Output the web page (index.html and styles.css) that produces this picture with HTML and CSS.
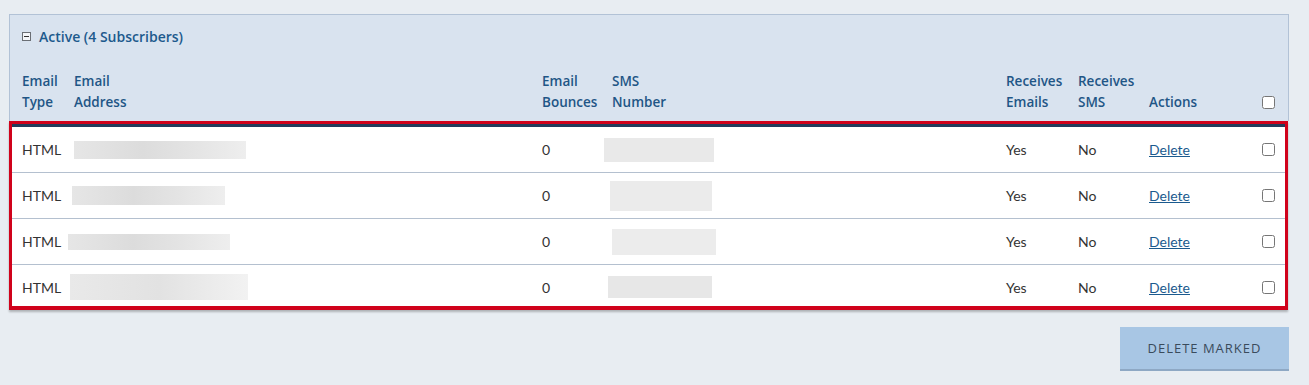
FILE: index.html
```html
<!DOCTYPE html>
<html>
<head>
<meta charset="utf-8">
<link rel="stylesheet" href="styles.css">
</head>
<body>
<div class="wrap">
  <div class="panel">
    <div class="panel-title">
      <svg class="toggle" width="9" height="9" viewBox="0 0 9 9"><rect x="0.5" y="0.5" width="8" height="8" fill="#f4f6f9" stroke="#6b6f75"/><line x1="2" y1="4.5" x2="7" y2="4.5" stroke="#333" stroke-width="1"/></svg>
      <span>Active (4 Subscribers)</span>
    </div>
    <div class="grid thead">
      <div class="th">Email<br>Type</div>
      <div class="th">Email<br>Address</div>
      <div class="th">Email<br>Bounces</div>
      <div class="th">SMS<br>Number</div>
      <div class="th">Receives<br>Emails</div>
      <div class="th">Receives<br>SMS</div>
      <div class="th">Actions</div>
      <div class="th chk"><input type="checkbox"></div>
    </div>
  </div>
  <div class="tbody">
    <div class="grid row">
      <div class="td">HTML</div>
      <div class="td"><span class="ph ph-e1"></span></div>
      <div class="td">0</div>
      <div class="td"><span class="ph ph-s1"></span></div>
      <div class="td">Yes</div>
      <div class="td">No</div>
      <div class="td"><a href="#">Delete</a></div>
      <div class="td chk"><input type="checkbox"></div>
    </div>
    <div class="grid row">
      <div class="td">HTML</div>
      <div class="td"><span class="ph ph-e2"></span></div>
      <div class="td">0</div>
      <div class="td"><span class="ph ph-s2"></span></div>
      <div class="td">Yes</div>
      <div class="td">No</div>
      <div class="td"><a href="#">Delete</a></div>
      <div class="td chk"><input type="checkbox"></div>
    </div>
    <div class="grid row">
      <div class="td">HTML</div>
      <div class="td"><span class="ph ph-e3"></span></div>
      <div class="td">0</div>
      <div class="td"><span class="ph ph-s3"></span></div>
      <div class="td">Yes</div>
      <div class="td">No</div>
      <div class="td"><a href="#">Delete</a></div>
      <div class="td chk"><input type="checkbox"></div>
    </div>
    <div class="grid row last">
      <div class="td">HTML</div>
      <div class="td"><span class="ph ph-e4"></span></div>
      <div class="td">0</div>
      <div class="td"><span class="ph ph-s4"></span></div>
      <div class="td">Yes</div>
      <div class="td">No</div>
      <div class="td"><a href="#">Delete</a></div>
      <div class="td chk"><input type="checkbox"></div>
    </div>
  </div>
  <div class="actions">
    <button class="btn">DELETE MARKED</button>
  </div>
</div>
</body>
</html>
```

FILE: styles.css
```css
html, body {
  margin: 0;
  padding: 0;
  background: #e8edf2;
  font-family: Lato, "Open Sans", sans-serif;
  font-size: 14px;
  color: #333;
}
.wrap {
  padding: 14px 0 0 9px;
  width: 1280px;
}
.panel {
  background: #d9e3ef;
  border: 1px solid #b2c2d6;
  border-bottom: none;
}
.panel-title {
  display: flex;
  align-items: center;
  height: 20px;
  padding: 11px 0 0 12px;
  color: #1d5a8d;
  font-family: "Open Sans", Lato, sans-serif;
  font-weight: 600;
  font-size: 14px;
  margin-bottom: 1px;
}
.toggle {
  margin-right: 8px;
  margin-top: 1px;
}
.grid {
  display: grid;
  grid-template-columns: 52px 468px 70px 394px 72px 71px 113px 1fr;
}
.thead {
  padding: 24px 0 8px 2px;
  align-items: end;
}
.th {
  padding-left: 10px;
  line-height: 21px;
  color: #1f5686;
  font-family: "Open Sans", Lato, sans-serif;
  font-weight: 600;
  font-size: 13.5px;
  white-space: nowrap;
}
.chk {
  display: flex;
  align-items: center;
}
.thead .chk {
  height: 21px;
}
input[type=checkbox] {
  margin: 0;
  width: 13px;
  height: 13px;
}
.tbody {
  width: 1279px;
  box-sizing: border-box;
  border: 3px solid #d0021b;
  border-bottom-width: 4px;
  background: #fff;
  box-shadow: 0 2px 2px rgba(0, 0, 0, 0.25);
}
.tbody::before {
  content: "";
  display: block;
  height: 3px;
  background: #223d5c;
}
.row {
  height: 45px;
  align-items: center;
  border-bottom: 1px solid #b4c0cf;
}
.row.last {
  box-sizing: border-box;
  height: 41px;
  padding-top: 3px;
  border-bottom: none;
}
.td {
  padding-left: 10px;
  display: flex;
  align-items: center;
  white-space: nowrap;
}
.td a {
  color: #1b5a8e;
  text-decoration: underline;
}
.ph {
  display: block;
  background: linear-gradient(90deg, #e6e6e6 0%, #dcdcdc 40%, #e4e4e4 70%, #eeeeee 100%);
}
.ph-e1 { width: 172px; height: 18px; margin-left: 0; }
.ph-e2 { width: 153px; height: 19px; margin-left: -2px; }
.ph-e3 { width: 162px; height: 16px; margin-left: -6px; }
.ph-e4 { width: 178px; height: 26px; margin-left: -4px; background: linear-gradient(90deg, #e9e9e9 0%, #e2e2e2 50%, #f2f2f2 100%); }
.ph-s1 { width: 110px; height: 24px; margin-left: -8px; background: #e9e9e9; }
.ph-s2 { width: 102px; height: 30px; margin-left: -2px; background: #ebebeb; }
.ph-s3 { width: 104px; height: 26px; margin-left: 0; background: #ececec; }
.ph-s4 { width: 104px; height: 22px; margin-left: -4px; background: #e7e7e7; }
.actions {
  display: flex;
  justify-content: flex-end;
  padding-top: 17px;
}
.btn {
  width: 169px;
  height: 44px;
  background: #a8c6e4;
  border: none;
  border-bottom: 2px solid #8ea8c4;
  color: #3a4b5c;
  font-family: "Open Sans", Lato, sans-serif;
  font-size: 13px;
  letter-spacing: 1px;
  padding: 0;
}
```
